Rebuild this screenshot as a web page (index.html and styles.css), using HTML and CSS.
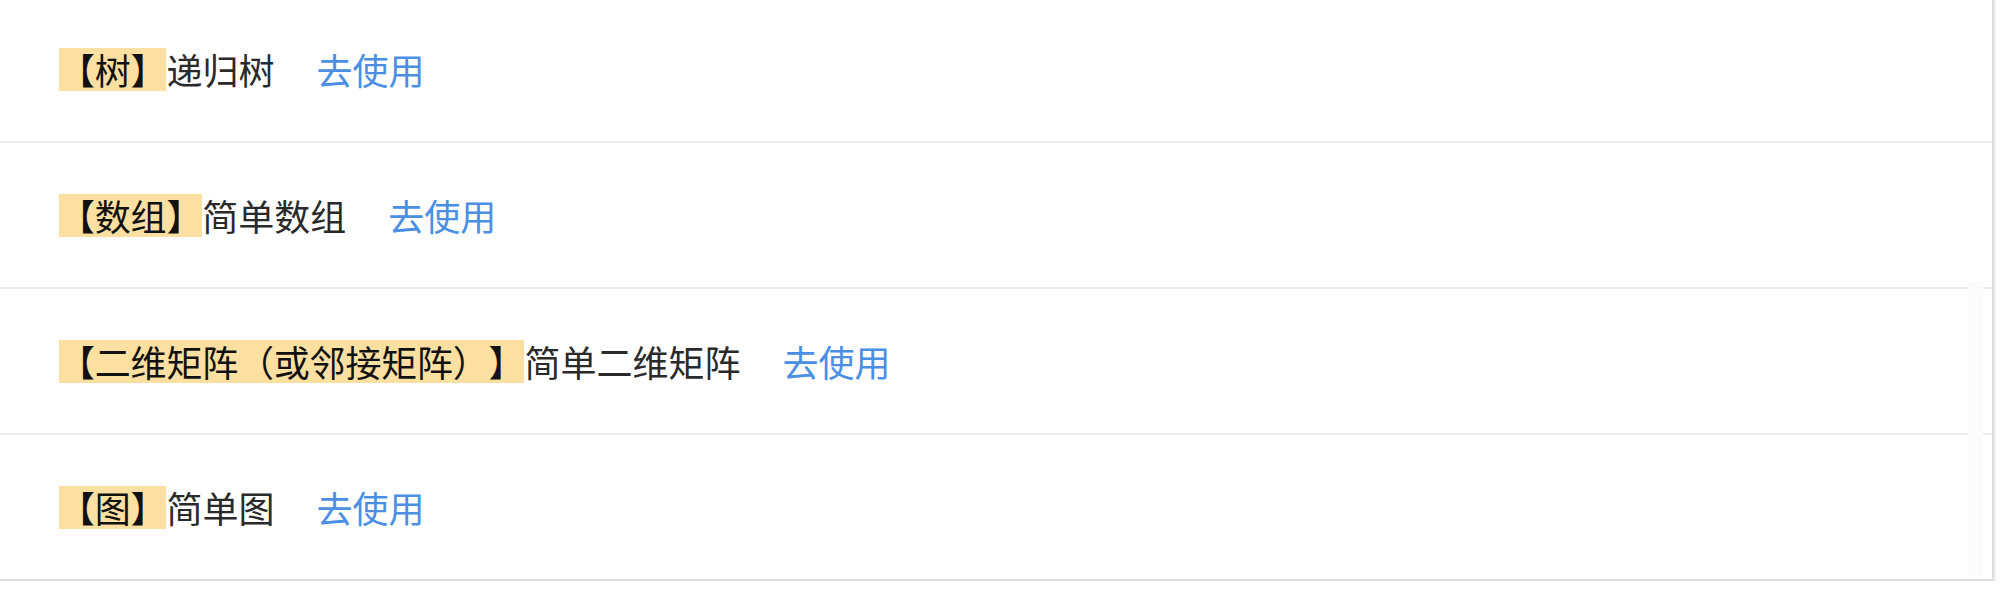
FILE: index.html
```html
<!DOCTYPE html>
<html lang="zh-CN">
<head>
<meta charset="utf-8">
<title>数据结构模板</title>
<link rel="stylesheet" href="styles.css">
</head>
<body>
<div class="panel">
  <ul class="list">
    <li class="row"><span class="tag">【树】</span><span class="name">递归树</span><a class="use" href="#">去使用</a></li>
    <li class="row"><span class="tag">【数组】</span><span class="name">简单数组</span><a class="use" href="#">去使用</a></li>
    <li class="row"><span class="tag">【二维矩阵（或邻接矩阵）】</span><span class="name">简单二维矩阵</span><a class="use" href="#">去使用</a></li>
    <li class="row"><span class="tag">【图】</span><span class="name">简单图</span><a class="use" href="#">去使用</a></li>
  </ul>
  <div class="scroll-thumb"></div>
</div>
</body>
</html>
```
FILE: styles.css
```css
html, body {
  margin: 0;
  padding: 0;
  background: #ffffff;
}
body {
  font-family: "Noto Sans CJK SC", "Noto Sans", sans-serif;
  color: #222222;
  overflow: hidden;
}
.panel {
  position: relative;
  width: 1992px;
  margin-top: -3px;
  border-right: 2px solid #dedede;
  box-shadow: 2px 2px 2px rgba(0, 0, 0, 0.06);
  background: #ffffff;
}
.list {
  list-style: none;
  margin: 0;
  padding: 0;
}
.row {
  display: flex;
  align-items: center;
  height: 144px;
  padding-left: 59px;
  border-bottom: 2px solid #ebebeb;
  font-size: 36px;
  line-height: 43px;
  text-spacing-trim: space-all;
  font-feature-settings: "halt" 0, "chws" 0;
}
.row:last-child {
  border-bottom-color: #dcdcdc;
}
.tag {
  display: inline-block;
  height: 43px;
  background: #fbe0a2;
  color: #111111;
  letter-spacing: -0.2px;
}
.name {
  color: #2a2a2a;
}
.use {
  margin-left: 42px;
  color: #4a8fe3;
  text-decoration: none;
}
.scroll-thumb {
  position: absolute;
  right: 9px;
  top: 285px;
  width: 15px;
  bottom: 4px;
  background: #fbfbfb;
}
```
